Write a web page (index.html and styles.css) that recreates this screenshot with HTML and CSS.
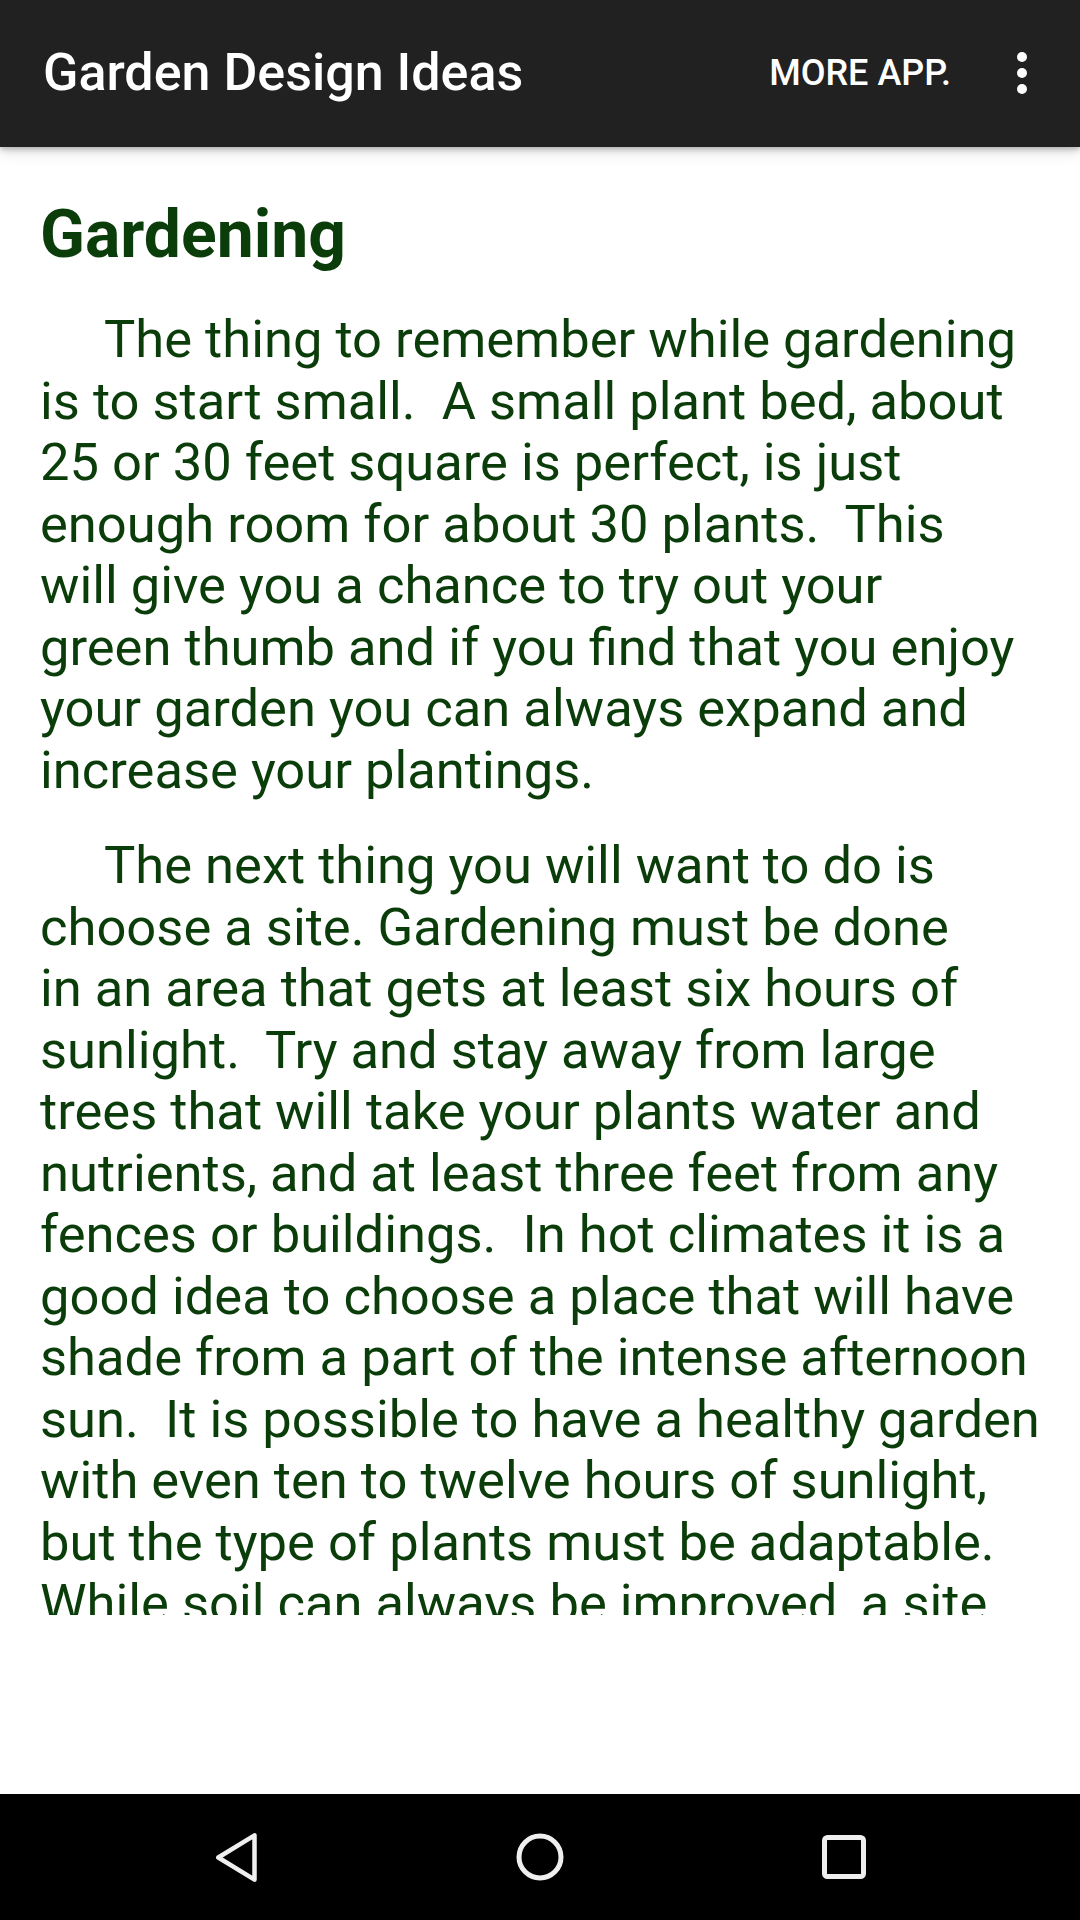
FILE: index.html
```html
<!DOCTYPE html>
<html>
<head>
<meta charset="utf-8">
<link rel="stylesheet" href="styles.css">
</head>
<body>
<div class="screen">
  <header class="appbar">
    <div class="title">Garden Design Ideas</div>
    <div class="action">MORE APP.</div>
    <div class="overflow"><span></span><span></span><span></span></div>
  </header>
  <main class="content">
    <div class="scroller">
      <h1 class="heading">Gardening</h1>
      <p class="para">The thing to remember while gardening<br>is to start small.&nbsp; A small plant bed, about<br>25 or 30 feet square is perfect, is just<br>enough room for about 30 plants.&nbsp; This<br>will give you a chance to try out your<br>green thumb and if you find that you enjoy<br>your garden you can always expand and<br>increase your plantings.</p>
      <p class="para">The next thing you will want to do is<br>choose a site. Gardening must be done<br>in an area that gets at least six hours of<br>sunlight.&nbsp; Try and stay away from large<br>trees that will take your plants water and<br>nutrients, and at least three feet from any<br>fences or buildings.&nbsp; In hot climates it is a<br>good idea to choose a place that will have<br>shade from a part of the intense afternoon<br>sun.&nbsp; It is possible to have a healthy garden<br>with even ten to twelve hours of sunlight,<br>but the type of plants must be adaptable.<br>While soil can always be improved, a site<br>with poor drainage will always be a<br>problem for your garden.</p>
    </div>
    <div class="adslot"></div>
  </main>
  <nav class="navbar">
    <svg class="nav-icon nav-back" width="48" height="52" viewBox="0 0 48 52"><path d="M40.5 4.3 L40.5 48.7 L4.3 26.5 Z" fill="none" stroke="#efefef" stroke-width="4.5" stroke-linejoin="round"/></svg>
    <svg class="nav-icon nav-home" width="52" height="52" viewBox="0 0 52 52"><circle cx="26" cy="26" r="21" fill="none" stroke="#efefef" stroke-width="5"/></svg>
    <svg class="nav-icon nav-recent" width="48" height="48" viewBox="0 0 48 48"><rect x="4.5" y="4.5" width="39" height="39" rx="3" fill="none" stroke="#efefef" stroke-width="5"/></svg>
  </nav>
</div>
</body>
</html>
```
FILE: styles.css
```css
* { box-sizing: border-box; }
html, body { margin: 0; padding: 0; background: #000; }
body { font-family: Roboto, "Noto Sans", sans-serif; }
.screen {
  width: 1080px;
  height: 1920px;
  display: flex;
  flex-direction: column;
  background: #fff;
  overflow: hidden;
}
.appbar {
  height: 147px;
  flex: none;
  background: #212121;
  display: flex;
  align-items: center;
  padding-left: 43px;
  position: relative;
  z-index: 2;
  box-shadow: 0 2px 6px rgba(0,0,0,0.28), 0 6px 14px rgba(0,0,0,0.10);
}
.title {
  color: #fff;
  font-weight: 500;
  font-size: 52px;
  flex: 1;
  margin-top: -2px;
}
.action {
  color: #fff;
  font-weight: 500;
  font-size: 36px;
  margin-right: 45px;
  margin-top: -2px;
}
.overflow {
  width: 52px;
  margin-right: 32px;
  display: flex;
  flex-direction: column;
  align-items: center;
  gap: 6px;
  margin-top: -2px;
}
.overflow span {
  width: 10px;
  height: 10px;
  border-radius: 50%;
  background: #fff;
}
.content {
  flex: 1;
  display: flex;
  flex-direction: column;
  background: #fff;
}
.scroller {
  height: 1468px;
  overflow: hidden;
  padding: 48px 40px 0 40px;
  color: #0b3d0b;
}
.heading {
  margin: 0 0 34px 0;
  font-size: 66px;
  font-weight: 700;
  line-height: 80px;
  color: #0b3d0b;
}
.para {
  margin: 0 0 34px 0;
  font-size: 52.5px;
  line-height: 61.5px;
  text-indent: 64px;
  white-space: nowrap;
}
.adslot { flex: 1; }
.navbar {
  height: 126px;
  flex: none;
  background: #000;
  display: flex;
  align-items: center;
  justify-content: flex-start;
  padding-left: 214px;
}
.nav-icon { display: block; flex: none; }
.nav-back { margin-right: 252px; }
.nav-home { margin-right: 254px; }
```
